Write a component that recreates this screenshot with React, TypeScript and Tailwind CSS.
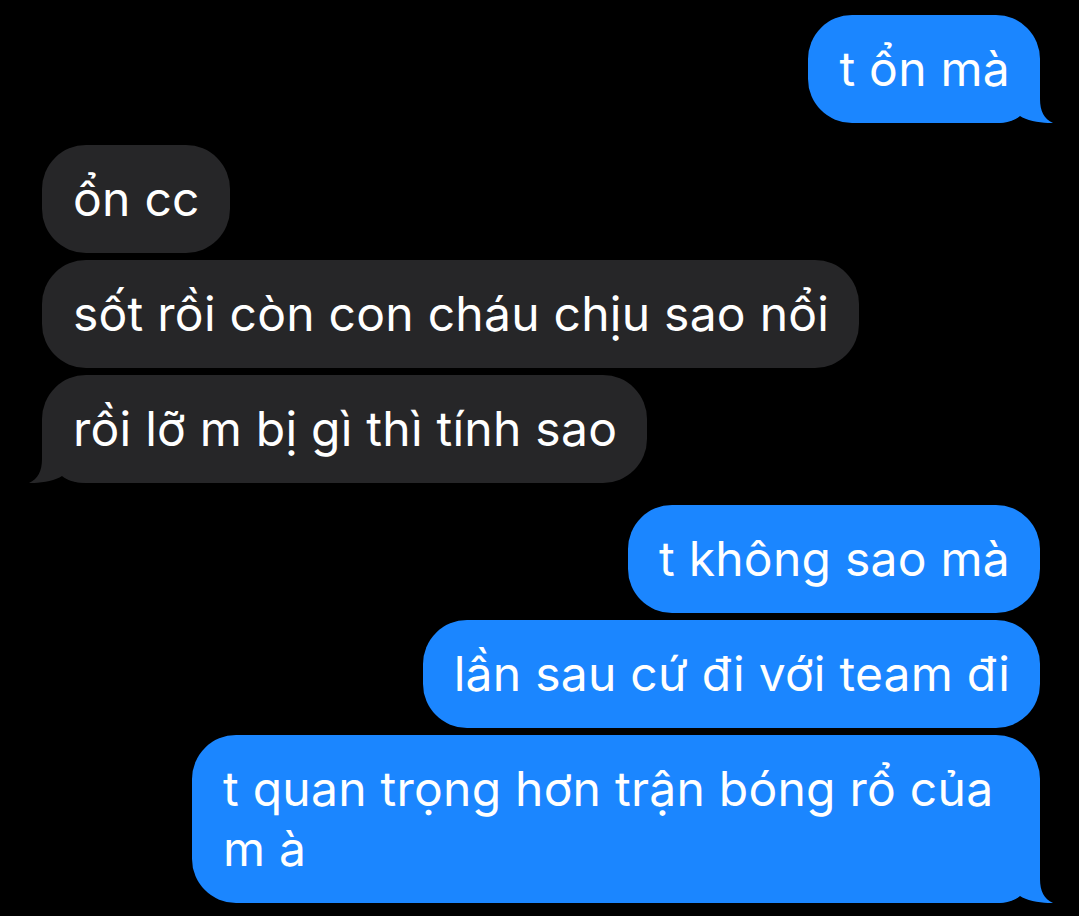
import React from "react";

type Msg = { text: React.ReactNode; tail?: boolean; wide?: boolean };

const BLUE = "#1b86ff";
const GRAY = "#262628";

function Tail({ color, side }: { color: string; side: "left" | "right" }) {
  return (
    <svg
      width="57"
      height="44"
      viewBox="0 0 57 44"
      className={
        side === "right"
          ? "absolute bottom-0 right-[-13px]"
          : "absolute bottom-0 left-[-13px] -scale-x-100"
      }
    >
      <path
        d="M0 0 L44 0 L44 20 C44 32 48 40 57 44 C48 44.5 31 42 24 37 C19 41 12 44 0 44 Z"
        fill={color}
      />
    </svg>
  );
}

function Bubble({ msg, side }: { msg: Msg; side: "left" | "right" }) {
  const color = side === "right" ? BLUE : GRAY;
  return (
    <div
      className={
        "relative rounded-[44px] py-[24px] pl-[31px] pr-[30px] text-[48px] leading-[60px] tracking-[0.25px] text-white " +
        (msg.wide ? "w-[848px]" : "")
      }
      style={{ backgroundColor: color }}
    >
      {msg.tail && <Tail color={color} side={side} />}
      <span className="relative">{msg.text}</span>
    </div>
  );
}

function Group({ side, msgs }: { side: "left" | "right"; msgs: Msg[] }) {
  return (
    <div
      className={
        "flex flex-col gap-[7px] " + (side === "right" ? "items-end" : "items-start")
      }
    >
      {msgs.map((m, i) => (
        <Bubble key={i} msg={m} side={side} />
      ))}
    </div>
  );
}

export default function App() {
  return (
    <div
      className="flex h-[916px] w-[1079px] flex-col gap-[22px] overflow-hidden bg-black pl-[42px] pr-[39px] pt-[15px]"
      style={{ fontFamily: "Inter, 'Noto Sans', sans-serif" }}
    >
      <Group side="right" msgs={[{ text: "t ổn mà", tail: true }]} />
      <Group
        side="left"
        msgs={[
          { text: "ổn cc" },
          { text: "sốt rồi còn con cháu chịu sao nổi" },
          { text: "rồi lỡ m bị gì thì tính sao", tail: true },
        ]}
      />
      <Group
        side="right"
        msgs={[
          { text: "t không sao mà" },
          { text: "lần sau cứ đi với team đi" },
          {
            text: (
              <>
                t quan trọng hơn trận bóng rổ của
                <br />m à
              </>
            ),
            tail: true,
            wide: true,
          },
        ]}
      />
    </div>
  );
}
